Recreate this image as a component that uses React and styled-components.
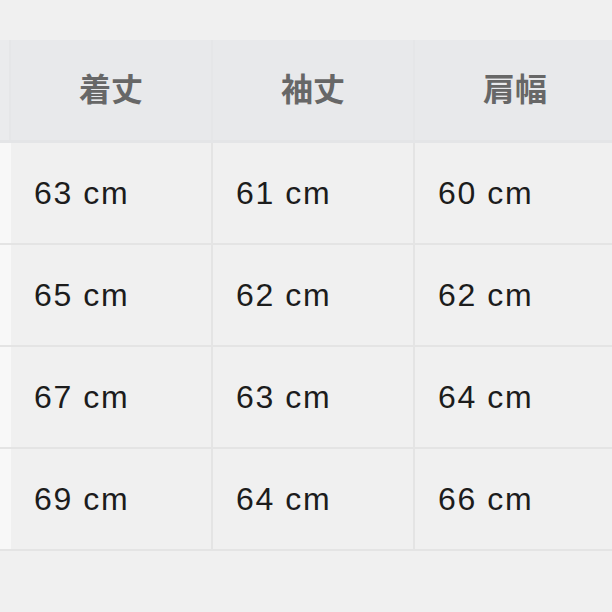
import React from 'react'
import styled, { createGlobalStyle } from 'styled-components'

const GlobalStyle = createGlobalStyle`
  * { box-sizing: border-box; margin: 0; padding: 0; }
  html, body {
    background: #f0f0f0;
    width: 612px;
    height: 612px;
    overflow: hidden;
  }
`;

const heads = ['着丈', '袖丈', '肩幅'];
const rows = [
  ['63 cm', '61 cm', '60 cm'],
  ['65 cm', '62 cm', '62 cm'],
  ['67 cm', '63 cm', '64 cm'],
  ['69 cm', '64 cm', '66 cm'],
];

const SizeTable = () => {
  return (
    <Page>
      <HeadRow>
        <HeadCell $edge />
        {heads.map((h) => (
          <HeadCell key={h}>{h}</HeadCell>
        ))}
      </HeadRow>
      <Body>
        {rows.map((r, i) => (
          <React.Fragment key={i}>
            <Cell $edge />
            {r.map((v, j) => (
              <Cell key={j}>{v}</Cell>
            ))}
          </React.Fragment>
        ))}
      </Body>
    </Page>
  );
};

const Page = styled.div`
  width: 612px;
  height: 612px;
  overflow: hidden;
  padding-top: 40px;
  background: #f0f0f0;
`;

const HeadRow = styled.div`
  display: grid;
  grid-template-columns: 9px 200px 200px 200px;
  grid-template-rows: 100px;
  gap: 2px;
  width: 620px;
  background: #e5e6e8;
  border-bottom: 3px solid #e4e5e7;
`;

const Body = styled.div`
  display: grid;
  grid-template-columns: 9px 200px 200px 200px;
  grid-template-rows: repeat(4, 100px);
  gap: 2px;
  width: 620px;
  background: #e4e4e4;
  padding-bottom: 2px;
`;

const HeadCell = styled.div`
  background: ${(p) => (p.$edge ? '#eaebed' : '#e8e9eb')};
  display: flex;
  align-items: center;
  justify-content: center;
  font-family: "Noto Sans CJK JP", "Noto Sans", sans-serif;
  font-weight: 700;
  font-size: 32px;
  color: #676767;
  padding-bottom: 6px;
`;

const Cell = styled.div`
  background: ${(p) => (p.$edge ? '#f8f8f8' : '#f0f0f0')};
  display: flex;
  align-items: center;
  padding-left: 23px;
  font-family: "Liberation Sans", Arial, sans-serif;
  font-size: 32px;
  letter-spacing: 1.6px;
  color: #1c1c1c;
`;

const App = () => (
  <>
    <GlobalStyle />
    <SizeTable />
  </>
);

export default App;
